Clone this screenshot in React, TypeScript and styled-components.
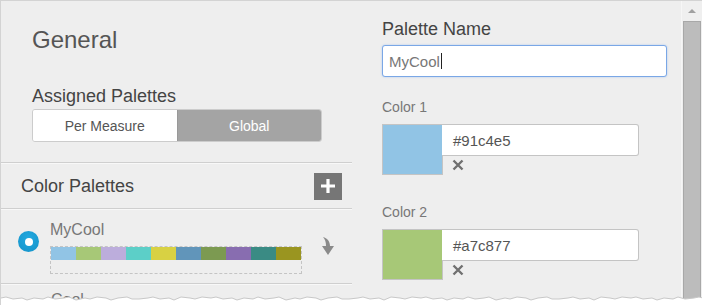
import React from "react";
import styled, { createGlobalStyle } from "styled-components";

const Global = createGlobalStyle`
  html, body { margin: 0; padding: 0; background: #ffffff; }
  body { font-family: "Liberation Sans", Arial, sans-serif; }
  * { box-sizing: border-box; }
`;

const Window = styled.div`
  position: relative;
  width: 702px;
  height: 305px;
  overflow: hidden;
  display: flex;
  background: #eeeeee;
  border-top: 1px solid #d3d3d3;
  border-left: 1px solid #d3d3d3;
`;

const LeftPanel = styled.div`
  width: 351px;
  flex-shrink: 0;
  display: flex;
  flex-direction: column;
  & > * { flex-shrink: 0; }
`;

const GeneralBlock = styled.div`
  padding: 25px 0 0 31px;
  height: 161px;
`;

const Title = styled.h1`
  margin: 0;
  font-size: 24px;
  line-height: 28px;
  font-weight: normal;
  color: #555555;
`;

const Label = styled.div`
  margin-top: 32px;
  font-size: 18px;
  line-height: 21px;
  color: #444444;
`;

const Toggle = styled.div`
  margin-top: 2px;
  display: flex;
  width: 290px;
  height: 33px;
  border: 1px solid #cccccc;
  border-radius: 3px;
  overflow: hidden;
`;

const ToggleOption = styled.div<{ $active?: boolean }>`
  flex: 1;
  display: flex;
  align-items: center;
  justify-content: center;
  font-size: 14px;
  color: ${(p) => (p.$active ? "#ffffff" : "#555555")};
  background: ${(p) => (p.$active ? "#a4a4a4" : "#ffffff")};
  border-left: ${(p) => (p.$active ? "1px solid #999" : "none")};
`;

const Divider = styled.div`
  height: 2px;
  border-top: 1px solid #cfcfcf;
  border-bottom: 1px solid #f8f8f8;
`;

const SectionHeader = styled.div`
  height: 44px;
  display: flex;
  align-items: center;
  justify-content: space-between;
  padding: 0 10px 0 20px;
`;

const SectionTitle = styled.div`
  font-size: 18px;
  color: #444444;
`;

const AddButton = styled.div`
  width: 28px;
  height: 27px;
  background: #767676;
  display: flex;
  align-items: center;
  justify-content: center;
`;

const PaletteItem = styled.div`
  height: 73px;
  display: flex;
  align-items: flex-start;
  padding: 11px 0 0 17px;
`;

const Radio = styled.div`
  margin-top: 10px;
  width: 21px;
  height: 21px;
  border-radius: 50%;
  background: radial-gradient(circle at 50% 35%, #22a9e0 0%, #1592c8 100%);
  display: flex;
  align-items: center;
  justify-content: center;
  &::after {
    content: "";
    width: 8px;
    height: 8px;
    border-radius: 50%;
    background: #ffffff;
  }
`;

const PaletteBody = styled.div`
  margin-left: 11px;
  display: flex;
  flex-direction: column;
`;

const PaletteName = styled.div`
  font-size: 16px;
  line-height: 18px;
  color: #777777;
`;

const SwatchBox = styled.div`
  margin-top: 7px;
  width: 252px;
  height: 28px;
  border: 1px dashed #c4c4c4;
  display: flex;
  align-items: flex-start;
`;

const SwatchCell = styled.div<{ $c: string }>`
  width: 25px;
  height: 13px;
  background: ${(p) => p.$c};
`;

const MoveIcon = styled.div`
  margin: 15px 0 0 18px;
  width: 16px;
  height: 20px;
`;

const NextItem = styled.div`
  padding: 6px 0 0 50px;
  font-size: 16px;
  color: #777777;
`;

const RightPanel = styled.div`
  flex: 1;
  padding: 18px 0 0 30px;
  display: flex;
  flex-direction: column;
`;

const FieldLabel = styled.div`
  font-size: 18px;
  line-height: 21px;
  color: #444444;
`;

const NameInput = styled.div`
  margin-top: 5px;
  width: 285px;
  height: 32px;
  border: 1px solid #7aa7e6;
  box-shadow: 0 0 2px #a8c6f0;
  border-radius: 3px;
  background: #ffffff;
  display: flex;
  align-items: center;
  padding-left: 6px;
  font-size: 15px;
  color: #777777;
`;

const Caret = styled.span`
  display: inline-block;
  width: 1px;
  height: 16px;
  background: #222;
  margin-left: 1px;
`;

const ColorLabel = styled.div<{ $top: number }>`
  margin-top: ${(p) => p.$top}px;
  font-size: 14px;
  line-height: 16px;
  color: #777777;
`;

const ColorRow = styled.div`
  margin-top: 9px;
  display: flex;
  align-items: flex-start;
`;

const Swatch = styled.div<{ $c: string }>`
  width: 61px;
  height: 51px;
  background: ${(p) => p.$c};
  border: 1px solid #c4c4c4;
`;

const HexColumn = styled.div`
  display: flex;
  flex-direction: column;
`;

const HexInput = styled.div`
  width: 197px;
  height: 32px;
  margin-left: -1px;
  border: 1px solid #c4c4c4;
  border-left: none;
  border-radius: 0 3px 3px 0;
  background: #ffffff;
  display: flex;
  align-items: center;
  padding-left: 11px;
  font-size: 15px;
  color: #555555;
`;

const RemoveIcon = styled.div`
  margin: 1px 0 0 9px;
  width: 12px;
  height: 12px;
`;

const Scrollbar = styled.div`
  width: 21px;
  flex-shrink: 0;
  background: #efefef;
  border-left: 1px solid #f6f6f6;
  display: flex;
  flex-direction: column;
  align-items: center;
`;

const ScrollArrow = styled.div`
  margin-top: 8px;
  width: 0;
  height: 0;
  border-left: 4px solid transparent;
  border-right: 4px solid transparent;
  border-bottom: 4px solid #a0a0a0;
`;

const Thumb = styled.div`
  margin-top: 8px;
  width: 18px;
  flex: 1;
  background: #bcbcbc;
  border: 1px solid #a8a8a8;
`;

const TornEdge = styled.svg`
  position: absolute;
  left: 0;
  bottom: 0;
  width: 702px;
  height: 12px;
`;

const paletteColors = [
  "#91c4e5",
  "#a7c877",
  "#bcaddc",
  "#5ccfc8",
  "#d8d143",
  "#6195ba",
  "#7c9a51",
  "#886db0",
  "#3a8b84",
  "#9a9520",
];

const CloseX = () => (
  <svg width="12" height="12" viewBox="0 0 12 12">
    <path d="M1.5 1.5 L10.5 10.5 M10.5 1.5 L1.5 10.5" stroke="#707070" strokeWidth="2.4" />
  </svg>
);

function tornPath() {
  const pts: string[] = [];
  const ys = [5, 4, 6, 5, 7, 5, 6, 4, 6, 5, 4, 7, 5, 6, 4, 5, 7, 5, 4, 6, 6, 5, 4, 6, 5, 7, 4, 5, 6, 4];
  let x = 0;
  let i = 0;
  while (x <= 702) {
    pts.push(`${x},${ys[i % ys.length]}`);
    x += 5 + (i % 3) * 2;
    i++;
  }
  pts.push("702,5");
  return pts;
}

export default function App() {
  const pts = tornPath();
  return (
    <>
      <Global />
      <Window>
        <LeftPanel>
          <GeneralBlock>
            <Title>General</Title>
            <Label>Assigned Palettes</Label>
            <Toggle>
              <ToggleOption>Per Measure</ToggleOption>
              <ToggleOption $active>Global</ToggleOption>
            </Toggle>
          </GeneralBlock>
          <Divider />
          <SectionHeader>
            <SectionTitle>Color Palettes</SectionTitle>
            <AddButton>
              <svg width="16" height="16" viewBox="0 0 16 16">
                <path d="M8 1 V15 M1 8 H15" stroke="#ffffff" strokeWidth="3.2" />
              </svg>
            </AddButton>
          </SectionHeader>
          <Divider />
          <PaletteItem>
            <Radio />
            <PaletteBody>
              <PaletteName>MyCool</PaletteName>
              <SwatchBox>
                {paletteColors.map((c) => (
                  <SwatchCell key={c} $c={c} />
                ))}
              </SwatchBox>
            </PaletteBody>
            <MoveIcon>
              <svg width="16" height="20" viewBox="0 0 16 20">
                <path
                  d="M3 1 C7 2 10 5 10 10 L14 10 L8 19 L2 10 L6 10 C6 6 5 3 3 1 Z"
                  fill="#8a8a8a"
                />
              </svg>
            </MoveIcon>
          </PaletteItem>
          <Divider />
          <NextItem>Cool</NextItem>
        </LeftPanel>
        <RightPanel>
          <FieldLabel>Palette Name</FieldLabel>
          <NameInput>
            MyCool
            <Caret />
          </NameInput>
          <ColorLabel $top={22}>Color 1</ColorLabel>
          <ColorRow>
            <Swatch $c="#91c4e5" />
            <HexColumn>
              <HexInput>#91c4e5</HexInput>
              <RemoveIcon>
                <CloseX />
              </RemoveIcon>
            </HexColumn>
          </ColorRow>
          <ColorLabel $top={29}>Color 2</ColorLabel>
          <ColorRow>
            <Swatch $c="#a7c877" />
            <HexColumn>
              <HexInput>#a7c877</HexInput>
              <RemoveIcon>
                <CloseX />
              </RemoveIcon>
            </HexColumn>
          </ColorRow>
        </RightPanel>
        <Scrollbar>
          <ScrollArrow />
          <Thumb />
        </Scrollbar>
        <TornEdge viewBox="0 0 702 12">
          <polygon points={`0,12 ${pts.join(" ")} 702,12`} fill="#ffffff" />
          <polyline points={pts.join(" ")} fill="none" stroke="#c8c8c8" strokeWidth="1" />
        </TornEdge>
      </Window>
    </>
  );
}
